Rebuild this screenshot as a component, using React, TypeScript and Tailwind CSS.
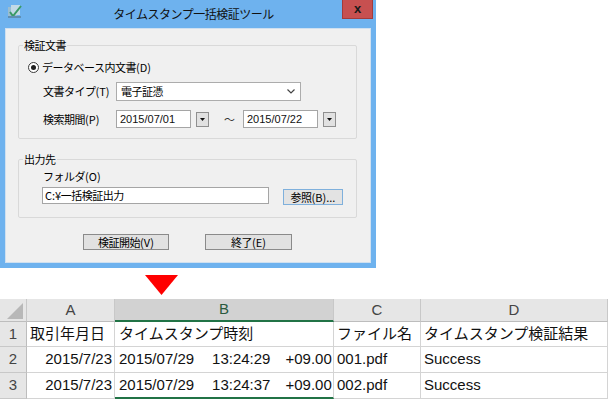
import React from "react";

function AppIcon() {
  return (
    <svg width="16" height="15" viewBox="0 0 16 15">
      <rect x="1" y="3" width="9" height="10" fill="#9bbdd0" />
      <rect x="4" y="1" width="9" height="10" fill="#c3d9e6" />
      <path d="M3 8 L6 12 L14 2" stroke="#3a9a66" strokeWidth="2" fill="none" />
      <rect x="1" y="12" width="13" height="2" fill="#5f8fb3" />
    </svg>
  );
}

function DropBtn() {
  return (
    <div className="w-[13px] h-[15px] bg-[#e1e1e1] border border-[#8f8f8f] flex items-center justify-center">
      <svg width="5" height="3" viewBox="0 0 5 3">
        <polygon points="0,0 5,0 2.5,3" fill="#111" />
      </svg>
    </div>
  );
}

function DateBox({ value }: { value: string }) {
  return (
    <div className="w-[75px] h-[18px] bg-white border border-[#a5a5a5] flex items-center pl-[3px] font-['Liberation_Sans',sans-serif] text-[11px] tracking-normal text-[#111]">
      {value}
    </div>
  );
}

function L({ children }: { children: React.ReactNode }) {
  return <span className="tracking-[0px]">{children}</span>;
}

function Dialog() {
  return (
    <div className="w-[376px] h-[268px] bg-[#6eb2ee] flex flex-col font-['Noto_Sans_CJK_JP',sans-serif] text-[11px] tracking-[-0.5px] text-black">
      <div className="h-[28px] flex items-start">
        <div className="pl-[7px] pt-[4px]">
          <AppIcon />
        </div>
        <div className="flex-1 text-center text-[12px] leading-[27px] pl-[22px] text-[#111]">
          タイムスタンプ一括検証ツール
        </div>
        <div className="mr-[3px] w-[31px] h-[19px] bg-[#c75050] border border-[#a43b3b] border-t-0 flex items-center justify-center font-['Liberation_Sans',sans-serif] text-[13px] font-bold tracking-normal text-[#1a1a1a] leading-none pb-[2px]">
          x
        </div>
      </div>
      <div className="mx-[5px] h-[235px] bg-[#f0f0f0] border border-[#cfe0f0] pl-[12px] pt-[8px] flex flex-col">
        <fieldset className="w-[339px] border border-[#d9d9d9] rounded-[2px]">
          <legend className="ml-[4px] px-[1px] leading-[16px]">検証文書</legend>
          <div className="pl-[9px] pt-[6px] pb-[10px]">
            <div className="h-[16px] flex items-center gap-[3px]">
              <div className="w-[11px] h-[11px] rounded-full border border-[#3a3a3a] bg-white flex items-center justify-center">
                <div className="w-[5px] h-[5px] rounded-full bg-[#1e1e1e]" />
              </div>
              <span>
                データベース内文書<L>(D)</L>
              </span>
            </div>
            <div className="mt-[7px] h-[19px] flex items-center pl-[15px]">
              <span className="w-[73px]">
                文書タイプ<L>(T)</L>
              </span>
              <div className="w-[185px] h-[19px] bg-white border border-[#acacac] flex items-center justify-between pl-[4px] pr-[5px]">
                <span>電子証憑</span>
                <svg width="8" height="5" viewBox="0 0 8 5">
                  <path d="M0.5 0.5 L4 4 L7.5 0.5" stroke="#444" strokeWidth="1.2" fill="none" />
                </svg>
              </div>
            </div>
            <div className="mt-[9px] h-[18px] flex items-center pl-[15px]">
              <span className="w-[73px]">
                検索期間<L>(P)</L>
              </span>
              <DateBox value="2015/07/01" />
              <div className="ml-[5px]">
                <DropBtn />
              </div>
              <span className="ml-[15px] w-[10px] text-[#333]">～</span>
              <div className="ml-[9px]">
                <DateBox value="2015/07/22" />
              </div>
              <div className="ml-[5px]">
                <DropBtn />
              </div>
            </div>
          </div>
        </fieldset>
        <fieldset className="mt-[12px] w-[339px] border border-[#d9d9d9] rounded-[2px]">
          <legend className="ml-[4px] px-[1px] leading-[16px]">出力先</legend>
          <div className="pl-[23px] pt-[2px] pb-[12px]">
            <div className="h-[14px] flex items-center pl-[1px]">
              フォルダ<L>(O)</L>
            </div>
            <div className="mt-[4px] flex items-start">
              <div className="w-[227px] h-[17px] bg-white border border-[#a5a5a5] flex items-center pl-[2px]">
                <L>C:</L>¥一括検証出力
              </div>
              <div className="ml-[14px] mt-[2px] w-[60px] h-[16px] bg-[#e3e3e3] border border-[#7fb0dc] flex items-center justify-center">
                参照<L>(B)...</L>
              </div>
            </div>
          </div>
        </fieldset>
        <div className="mt-[16px] pl-[65px] flex gap-[36px]">
          <div className="w-[86px] h-[16px] bg-[#e1e1e1] border border-[#8a8a8a] flex items-center justify-center">
            検証開始<L>(V)</L>
          </div>
          <div className="w-[87px] h-[16px] bg-[#e1e1e1] border border-[#8a8a8a] flex items-center justify-center">
            終了<L>(E)</L>
          </div>
        </div>
      </div>
    </div>
  );
}

const hdr = "bg-[#e6e6e6] border-r border-b border-r-[#c8c8c8] border-b-[#bdbdbd] flex items-center justify-center text-[#444]";
const rowHdr = "bg-[#e6e6e6] border-r border-b border-r-[#bdbdbd] border-b-[#c8c8c8] flex items-center justify-center text-[#444]";
const cell = "bg-white border-r border-b border-[#d4d4d4] flex items-center whitespace-nowrap overflow-visible text-[#111]";

function Sheet() {
  return (
    <div className="grid grid-cols-[27px_88px_219px_87px_187px] grid-rows-[23px_25px_26px_26px] font-['Liberation_Sans','Noto_Sans_CJK_JP',sans-serif] text-[15px]">
      <div className="bg-[#e6e6e6] border-r border-b border-r-[#c8c8c8] border-b-[#bdbdbd] flex items-end justify-end pr-[3px] pb-[2px]">
        <svg width="16" height="16" viewBox="0 0 16 16">
          <polygon points="16,0 16,16 0,16" fill="#b8b8b8" />
        </svg>
      </div>
      <div className={hdr}>A</div>
      <div className="bg-[#d2d2d2] border-r border-r-[#c8c8c8] border-b-2 border-b-[#217346] flex items-center justify-center text-[#2a5a3e]">B</div>
      <div className={hdr}>C</div>
      <div className={hdr}>D</div>

      <div className={rowHdr}>1</div>
      <div className={cell + " pl-[3px]"}>取引年月日</div>
      <div className={cell + " pl-[4px]"}>タイムスタンプ時刻</div>
      <div className={cell + " pl-[3px]"}>ファイル名</div>
      <div className={cell + " pl-[3px]"}>タイムスタンプ検証結果</div>

      <div className={rowHdr}>2</div>
      <div className={cell + " justify-end pr-[2px]"}>2015/7/23</div>
      <div className={cell + " pl-[4px]"}>
        <span>2015/07/29</span>
        <span className="ml-[18px]">13:24:29</span>
        <span className="ml-[15px]">+09.00</span>
      </div>
      <div className={cell + " pl-[3px]"}>001.pdf</div>
      <div className={cell + " pl-[3px]"}>Success</div>

      <div className={rowHdr}>3</div>
      <div className={cell + " justify-end pr-[2px]"}>2015/7/23</div>
      <div className="bg-white border-r border-r-[#d4d4d4] border-b-2 border-b-[#217346] flex items-center whitespace-nowrap text-[#111] pl-[4px]">
        <span>2015/07/29</span>
        <span className="ml-[18px]">13:24:37</span>
        <span className="ml-[15px]">+09.00</span>
      </div>
      <div className={cell + " pl-[3px]"}>002.pdf</div>
      <div className={cell + " pl-[3px]"}>Success</div>
    </div>
  );
}

export default function App() {
  return (
    <div className="w-[610px] h-[399px] bg-white overflow-hidden">
      <Dialog />
      <div className="h-[31px] pl-[145px] pt-[7px]">
        <svg width="33" height="20" viewBox="0 0 33 20">
          <polygon points="0,0 33,0 16.5,20" fill="#ff0000" />
        </svg>
      </div>
      <Sheet />
    </div>
  );
}
